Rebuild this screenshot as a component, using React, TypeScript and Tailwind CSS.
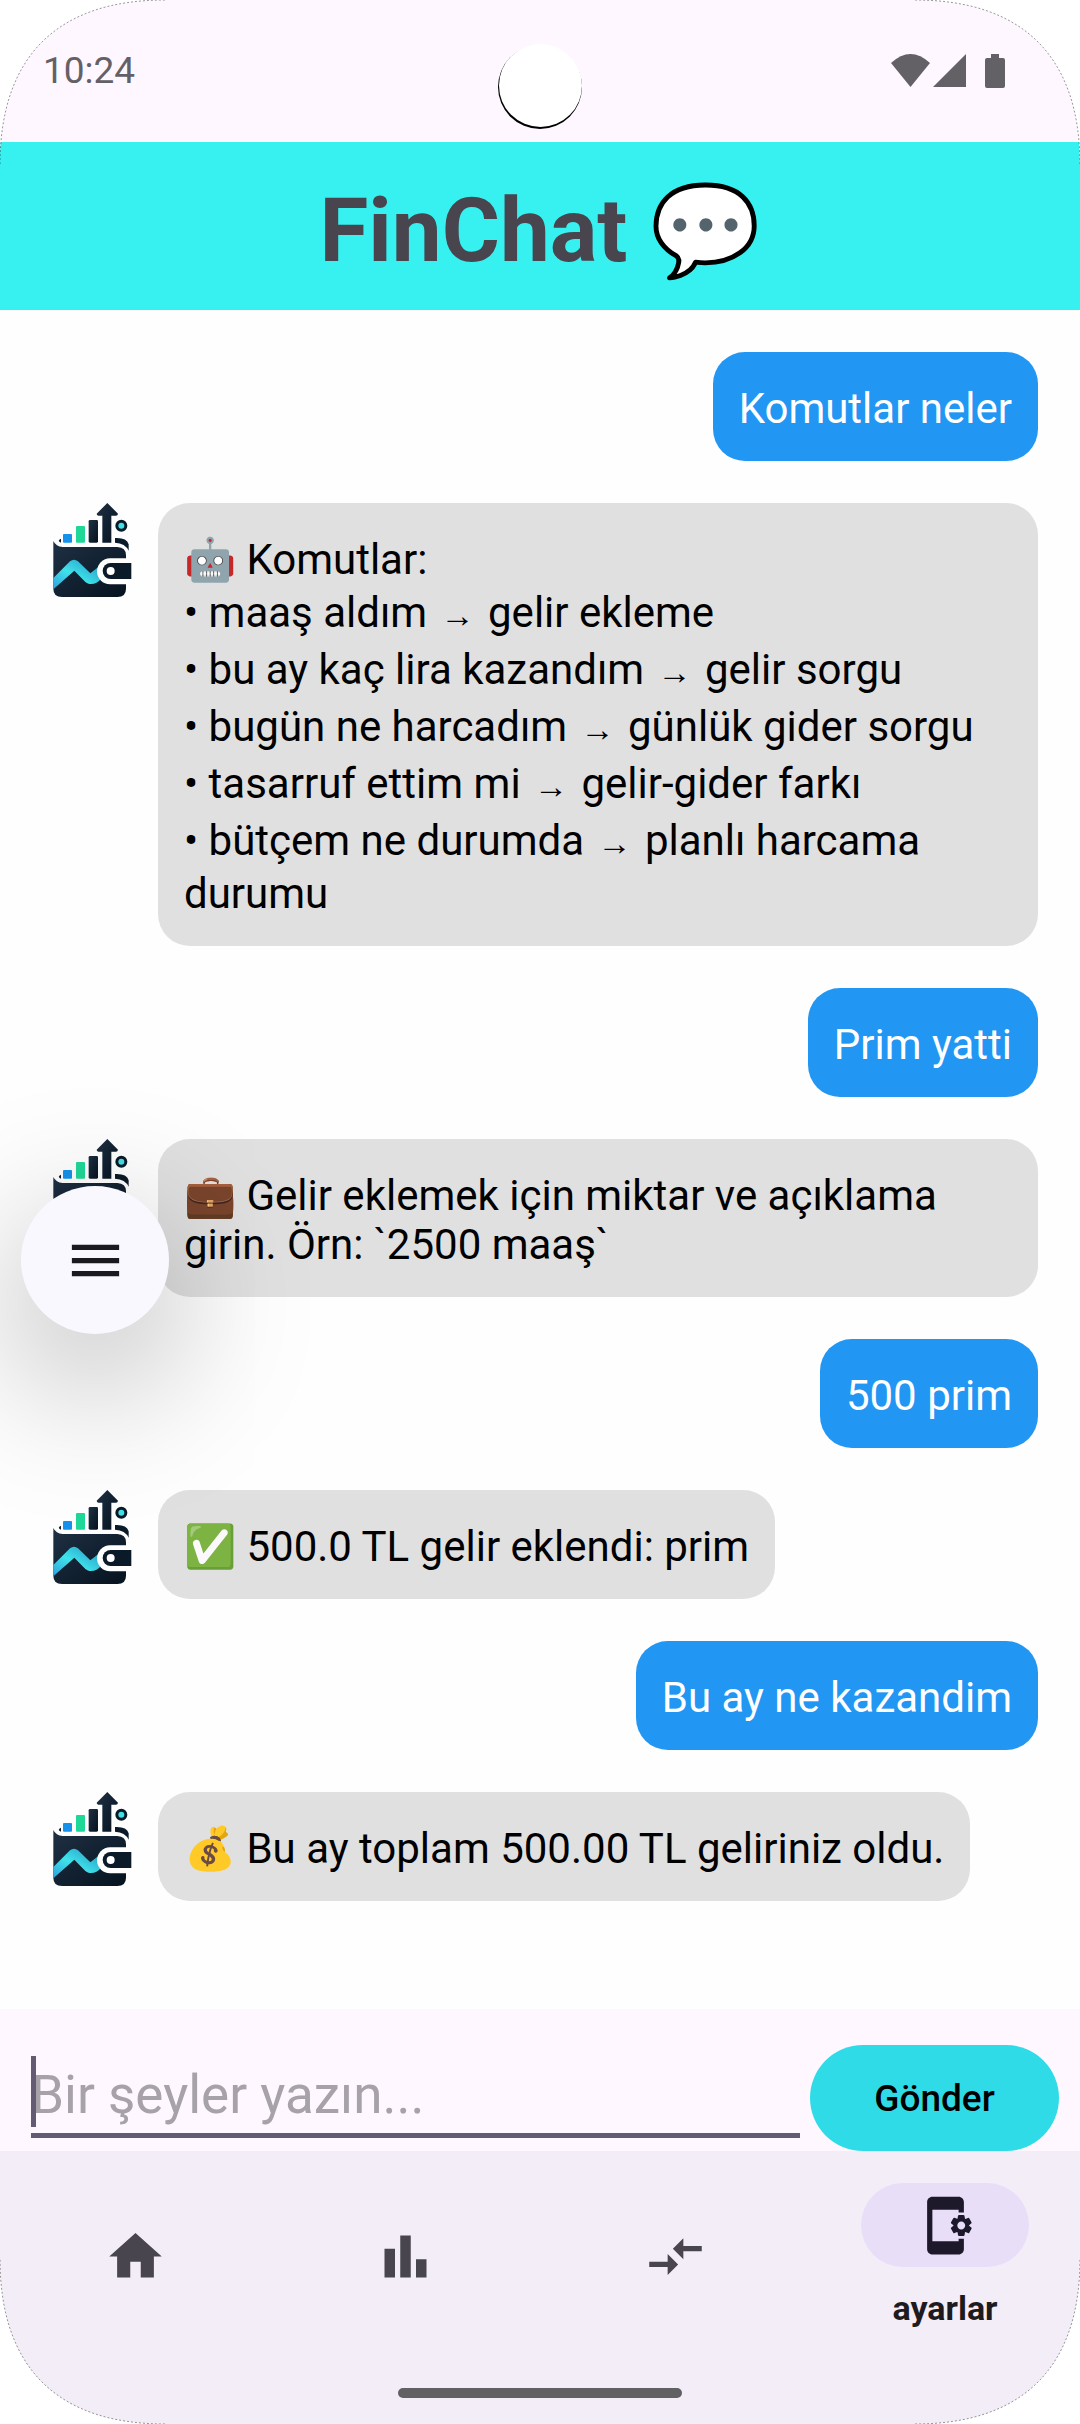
import { useState, type ReactNode } from "react";
import { MdAppSettingsAlt, MdBarChart, MdCompareArrows, MdHome, MdMenu } from "react-icons/md";

function WalletLogo() {
  return (
    <svg viewBox="36 39 315 315" className="size-[105px] shrink-0" role="img" aria-label="FinChat">
      <defs>
        <linearGradient id="navy" x1="0" y1="0" x2="1" y2="1">
          <stop offset="0" stopColor="#1f3144" />
          <stop offset="1" stopColor="#06121f" />
        </linearGradient>
        <linearGradient id="cyan" x1="0" y1="1" x2="1" y2="0">
          <stop offset="0" stopColor="#2f9fdc" />
          <stop offset="0.45" stopColor="#3fe3ea" />
          <stop offset="1" stopColor="#2390c4" />
        </linearGradient>
      </defs>
      <path d="M232 39 L264 71 Q263 77 258 77 H244 V158 H217 V77 H205 Q200 76 200 71 Z" fill="url(#navy)" />
      <rect x="176" y="90" width="28" height="68" rx="4" fill="url(#navy)" />
      <rect x="138" y="108" width="27" height="50" rx="3" fill="#1fd796" />
      <rect x="99" y="132" width="27" height="26" rx="3" fill="#1592ea" />
      <circle cx="274" cy="107" r="13.5" fill="#3fe0e6" stroke="#0b1a28" strokeWidth="9" />
      <path d="M255 144 Q290 142 296 163 V182 Q286 160 255 158 Z" fill="#0b1a28" />
      <path d="M93 146 Q80 152 93 158 Z" fill="#0b1a28" />
      <path d="M70 153 Q78 170 98 171 H262 Q288 172 288 196 V296 Q288 321 262 321 H96 Q70 321 70 296 Z" fill="url(#navy)" />
      <path
        d="M70 264 L120 214 Q132 204 144 214 L181 250 L204 232 Q200 252 212 268 Q200 284 178 282 Q172 281 166 276 L133 242 L70 298 Z"
        fill="url(#cyan)"
      />
      <path d="M304 205 H240 A39 39 0 0 0 240 283 H304 Z" fill="#fff" />
      <path d="M304 219 H242 A24 24 0 0 0 242 267 H304 Z" fill="#0b1a28" />
      <circle cx="242" cy="243" r="12" fill="#fff" />
    </svg>
  );
}

function Arrow() {
  return (
    <span className="inline-block w-10 text-center leading-[57px]">
      <span className="font-['Liberation_Serif',serif] text-[34px] leading-none">→</span>
    </span>
  );
}

function Bubble({ mine = false, children }: { mine?: boolean; children: ReactNode }) {
  if (mine) {
    return (
      <li className="flex justify-end">
        <div className="rounded-[32px] bg-[#2196f3] px-[26px] pt-8 pb-7 text-white">{children}</div>
      </li>
    );
  }
  return (
    <li className="flex items-start gap-[11px]">
      <WalletLogo />
      <div className="rounded-[32px] bg-[#e0e0e0] px-[26px] pt-8 pb-7 text-black">{children}</div>
    </li>
  );
}

function Corner({ className }: { className: string }) {
  return (
    <svg viewBox="0 0 167 167" className={`pointer-events-none absolute size-[167px] ${className}`} aria-hidden="true">
      <path d="M0 0 H165 C57 0 0 57 0 165 Z" fill="#fff" />
      <path d="M165 0 C57 0 0 57 0 165" fill="none" stroke="#000" strokeOpacity="0.4" strokeDasharray="2 2" />
    </svg>
  );
}

const commands = [
  ["maaş aldım", "gelir ekleme"],
  ["bu ay kaç lira kazandım", "gelir sorgu"],
  ["bugün ne harcadım", "günlük gider sorgu"],
  ["tasarruf ettim mi", "gelir-gider farkı"],
  ["bütçem ne durumda", "planlı harcama durumu"],
];

const tabs = [
  { name: "ana sayfa", Icon: MdHome },
  { name: "grafikler", Icon: MdBarChart },
  { name: "işlemler", Icon: MdCompareArrows },
];

export default function App() {
  const [draft, setDraft] = useState("");
  return (
    <div className="relative flex min-h-screen flex-col overflow-hidden bg-[#fefefe] font-[Roboto,sans-serif]">
      <div className="flex h-[142px] items-start justify-between bg-[#fef7ff] pt-[49px] pr-[75px] pl-[43px] text-[#646166]">
        <time className="text-[37px] leading-[43px]">10:24</time>
        <svg viewBox="0 0 114 34" className="mt-[5px] h-[34px] w-[114px]" fill="currentColor" role="img" aria-label="Wi-Fi, sinyal, pil">
          <path d="M0 9 Q19.500 -9 39 9 L19.500 33 Z" />
          <path d="M42 33 L75 0 V33 Z" />
          <path d="M100 0 H108 V4 H112 Q114 4 114 6 V32 Q114 34 112 34 H96 Q94 34 94 32 V6 Q94 4 96 4 H100 Z" />
        </svg>
      </div>
      <div className="absolute top-[45px] left-1/2 size-[84px] -translate-x-1/2 rounded-full bg-black" aria-hidden="true">
        <div className="-mt-px ml-auto size-[83px] rounded-full bg-white" />
      </div>

      <header className="flex h-[168px] items-center justify-center bg-[#37f1f1] pt-2.5">
        <h1 className="text-[89px] leading-[104px] font-bold text-[#49454f]">FinChat 💬</h1>
      </header>

      <main className="relative grow">
        <ul className="flex flex-col gap-[42px] p-[42px] text-[42px] leading-[49px]">
          <Bubble mine>Komutlar neler</Bubble>
          <Bubble>
            <p>🤖 Komutlar:</p>
            {commands.map(([phrase, result]) => (
              <p key={phrase}>
                • {phrase} <Arrow /> {result}
              </p>
            ))}
          </Bubble>
          <Bubble mine>Prim yatti</Bubble>
          <Bubble>💼 Gelir eklemek için miktar ve açıklama girin. Örn: `2500 maaş`</Bubble>
          <Bubble mine>500 prim</Bubble>
          <Bubble>✅ 500.0 TL gelir eklendi: prim</Bubble>
          <Bubble mine>Bu ay ne kazandim</Bubble>
          <Bubble>💰 Bu ay toplam 500.00 TL geliriniz oldu.</Bubble>
        </ul>
        <button
          type="button"
          aria-label="Menü"
          className="absolute top-[876px] left-[21px] flex size-[148px] items-center justify-center rounded-full bg-[#f9f8ff] text-[#1b1a1f] shadow-[0_44px_140px_10px_rgba(0,0,0,0.26)]"
        >
          <MdMenu className="size-[63px]" />
        </button>
      </main>

      <form className="flex items-end gap-2.5 bg-[#fef7ff] pt-9 pr-[21px] pl-[31px]" onSubmit={(e) => e.preventDefault()}>
        <div className="relative mb-[13px] grow">
          <input
            aria-label="Mesaj"
            value={draft}
            onChange={(e) => setDraft(e.target.value)}
            placeholder="Bir şeyler yazın..."
            className="block h-[82px] w-full border-b-[5px] border-[#625b71] text-[53px] text-[#1d1b20] outline-none placeholder:text-[#a7a2aa]"
          />
          <span className="absolute top-0 left-0 h-[71px] w-[5px] bg-[#625b71]" aria-hidden="true" />
        </div>
        <button type="submit" className="h-[106px] w-[249px] rounded-full bg-[#30dbe8] pt-0.5 text-[37px] font-medium text-black">
          Gönder
        </button>
      </form>

      <nav className="bg-[#f3edf7]">
        <div className="grid h-[210px] grid-cols-4">
          {tabs.map(({ name, Icon }) => (
            <button key={name} type="button" aria-label={name} className="flex items-center justify-center text-[#49454f]">
              <Icon className="size-[63px]" />
            </button>
          ))}
          <button type="button" aria-current="page" className="flex flex-col items-center justify-center gap-5 text-[#1d1b20]">
            <span className="flex h-[84px] w-[168px] items-center justify-center rounded-full bg-[#e8def8] text-[#1d192b]">
              <MdAppSettingsAlt className="size-[63px]" />
            </span>
            <span className="text-[34px] leading-[42px] font-bold">ayarlar</span>
          </button>
        </div>
        <div className="flex h-[63px] items-start justify-center pt-[27px]">
          <div className="h-2.5 w-[284px] rounded-full bg-[#616062]" />
        </div>
      </nav>

      <Corner className="top-0 left-0" />
      <Corner className="top-0 right-0 -scale-x-100" />
      <Corner className="bottom-0 left-0 -scale-y-100" />
      <Corner className="right-0 bottom-0 rotate-180" />
    </div>
  );
}
